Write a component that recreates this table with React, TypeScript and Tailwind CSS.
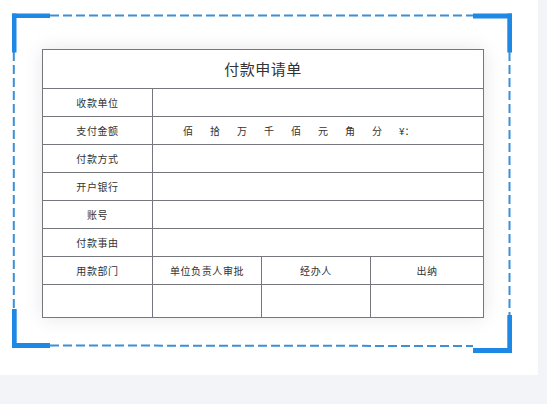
import React from 'react';

const labelRows = ['收款单位', '支付金额', '付款方式', '开户银行', '账号', '付款事由'];
const amountUnits = ['佰', '拾', '万', '千', '佰', '元', '角', '分', '¥：'];

// scan-style frame: dashed border with four blue corner brackets
const ScanFrame: React.FC = () => (
  <svg className="absolute inset-0 pointer-events-none" width="538" height="375" viewBox="0 0 538 375">
    <g stroke="#3d8fd6" strokeWidth="2" strokeDasharray="9 4" fill="none">
      <line x1="50" y1="15.5" x2="473" y2="15.5" />
      <line x1="50" y1="345.5" x2="473" y2="346" />
      <line x1="13.8" y1="52" x2="13.8" y2="309" />
      <line x1="509.5" y1="52" x2="509.5" y2="315" />
    </g>
    <g fill="#1e88e5">
      <rect x="12" y="13.5" width="38" height="4.5" />
      <rect x="12" y="13.5" width="4.5" height="39" />
      <rect x="473" y="13.5" width="39" height="5" />
      <rect x="507.3" y="13.5" width="4.7" height="39" />
      <rect x="12" y="309" width="4.7" height="39" />
      <rect x="12" y="343" width="38" height="5" />
      <rect x="507.3" y="315" width="4.7" height="38" />
      <rect x="473" y="348" width="39" height="5" />
    </g>
  </svg>
);

export default function App() {
  const cell = 'border border-[#76777c] text-center align-middle';
  return (
    <div
      className="w-[547px] h-[404px] bg-[#f3f4f8] text-[#333]"
      style={{ fontFamily: '"Noto Sans CJK SC", "Noto Sans", sans-serif' }}
    >
      <div className="relative w-[538px] h-[375px] bg-white pt-[49px] pl-[42px]">
        <ScanFrame />
        <table className="relative table-fixed border-collapse w-[441px] bg-white shadow-[0_0_18px_rgba(0,0,0,0.10)]">
          <colgroup>
            <col className="w-[110px]" />
            <col className="w-[109px]" />
            <col className="w-[109px]" />
            <col className="w-[113px]" />
          </colgroup>
          <tbody>
            <tr className="h-[39px]">
              <td colSpan={4} className={`${cell} text-[15px] font-normal tracking-[0.5px] text-[#333]`}>
                付款申请单
              </td>
            </tr>
            {labelRows.map((label) => (
              <tr key={label} className="h-[28px]">
                <td className={`${cell} text-[10px] tracking-[0.6px]`}>{label}</td>
                <td colSpan={3} className="border border-[#76777c] align-middle">
                  {label === '支付金额' && (
                    <div className="flex gap-[17px] pl-[30px] text-[10px] leading-none">
                      {amountUnits.map((u, i) => (
                        <span key={i}>{u}</span>
                      ))}
                    </div>
                  )}
                </td>
              </tr>
            ))}
            <tr className="h-[28px]">
              <td className={`${cell} text-[10px] tracking-[0.6px]`}>用款部门</td>
              <td className={`${cell} text-[10px] tracking-[0.6px]`}>单位负责人审批</td>
              <td className={`${cell} text-[10px] tracking-[0.6px]`}>经办人</td>
              <td className={`${cell} text-[10px] tracking-[0.6px]`}>出纳</td>
            </tr>
            <tr className="h-[33px]">
              <td className={cell}></td>
              <td className={cell}></td>
              <td className={cell}></td>
              <td className={cell}></td>
            </tr>
          </tbody>
        </table>
      </div>
    </div>
  );
}
